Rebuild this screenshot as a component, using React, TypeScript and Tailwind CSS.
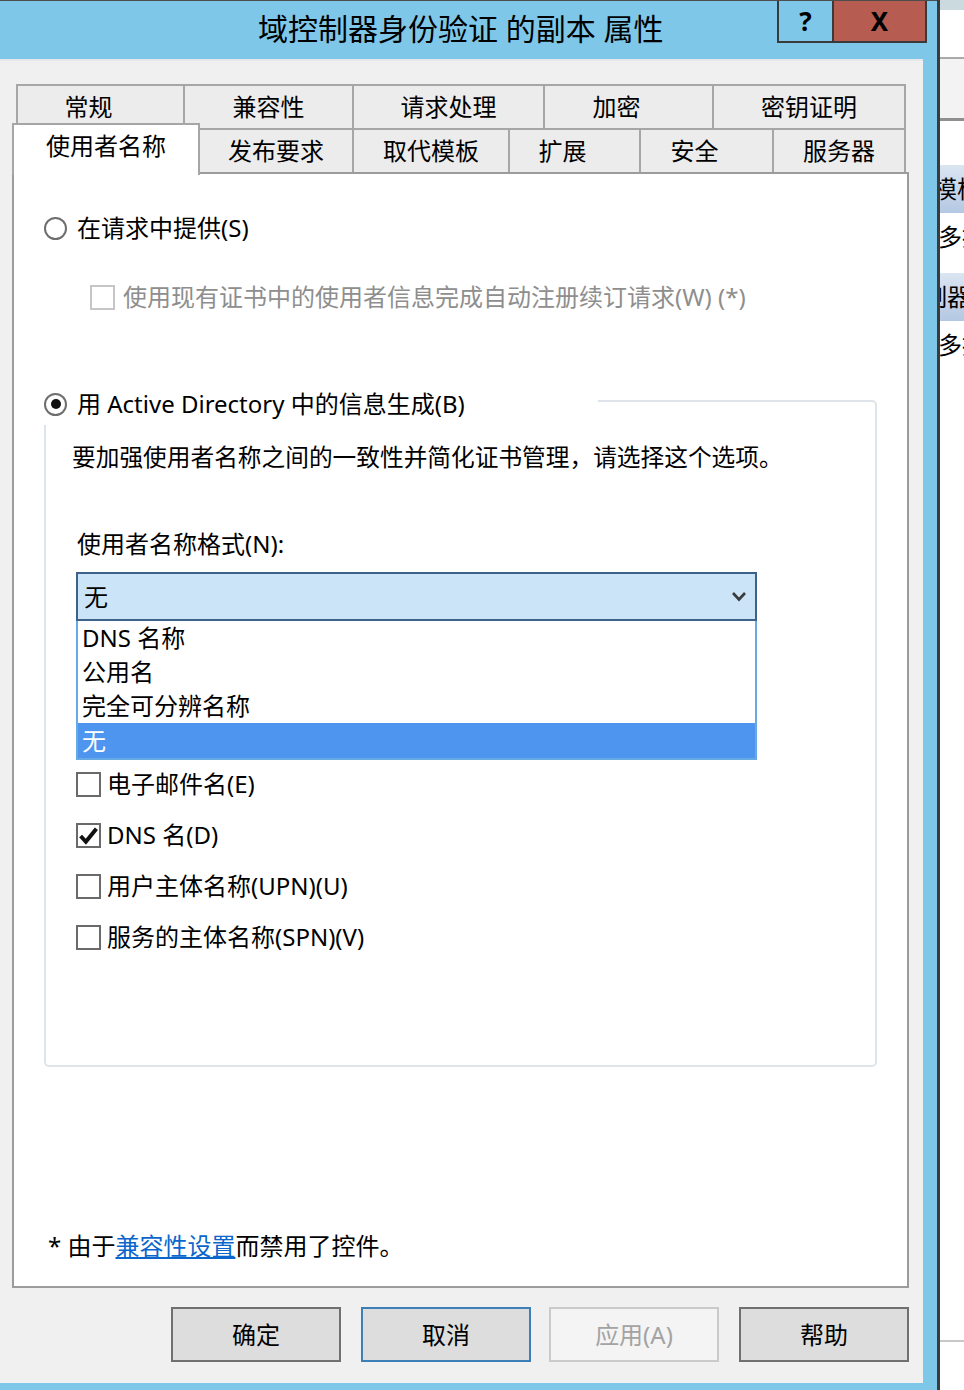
import React from "react";

function Radio({ checked }: { checked?: boolean }) {
  return (
    <div className="w-[23px] h-[23px] rounded-full border-2 border-[#6e6e6e] bg-white flex items-center justify-center shrink-0">
      {checked ? <div className="w-[10px] h-[10px] rounded-full bg-[#111]" /> : null}
    </div>
  );
}

function Check({ checked, disabled }: { checked?: boolean; disabled?: boolean }) {
  return (
    <div
      className={
        "w-[25px] h-[25px] border-2 bg-white flex items-center justify-center shrink-0 " +
        (disabled ? "border-[#c6c6c6]" : "border-[#6a6a6a]")
      }
    >
      {checked ? (
        <svg width="21" height="21" viewBox="0 0 20 20">
          <path d="M2.5 10.5 L7.5 16 L17.5 3.5" fill="none" stroke="#111" strokeWidth="3.8" strokeLinejoin="miter" />
        </svg>
      ) : null}
    </div>
  );
}

function Btn({ label, kind }: { label: string; kind?: "focus" | "disabled" }) {
  const cls =
    kind === "focus"
      ? "bg-[#dddddd] border-[#3c7fb7] text-black"
      : kind === "disabled"
      ? "bg-[#f4f4f4] border-[#cacaca] text-[#a3a3a3]"
      : "bg-[#dddddd] border-[#707070] text-black";
  return (
    <div className={"w-[170px] h-[55px] border-2 flex items-center justify-center text-[24px] leading-[32px] shrink-0 " + cls}>
      {label}
    </div>
  );
}

export default function App() {
  const row1 = [
    ["常规", 169],
    ["兼容性", 169],
    ["请求处理", 191],
    ["加密", 169],
    ["密钥证明", 192],
  ] as const;
  const row2 = [
    ["发布要求", 154],
    ["取代模板", 156],
    ["扩展", 131],
    ["安全", 133],
    ["服务器", 132],
  ] as const;
  const items = ["DNS 名称", "公用名", "完全可分辨名称", "无"];
  const checks: [string, boolean][] = [
    ["电子邮件名(E)", false],
    ["DNS 名(D)", true],
    ["用户主体名称(UPN)(U)", false],
    ["服务的主体名称(SPN)(V)", false],
  ];

  return (
    <div className="w-[964px] h-[1390px] flex overflow-hidden bg-white text-black font-['Noto_Sans','Noto_Sans_CJK_SC',sans-serif]">
      {/* dialog */}
      <div className="w-[937px] h-full flex flex-col bg-[#7fc7e8] border-t border-[#4d4d4d] shrink-0">
        {/* title bar */}
        <div className="h-[58px] flex items-start shrink-0">
          <div className="flex-1 pl-[258px] pt-[8px] text-[30px] leading-[40px] whitespace-nowrap">
            域控制器身份验证 的副本 属性
          </div>
          <div className="flex mr-[10px]">
            <div className="w-[57px] h-[42px] border-2 border-t-0 border-[#3a3a3a] bg-[#7fc7e8] flex items-center justify-center text-[26px] font-bold leading-none">
              ?
            </div>
            <div className="w-[93px] h-[42px] border-2 border-t-0 border-l-0 border-[#3a3a3a] bg-[#b65c50] flex items-center justify-center text-[26px] font-bold leading-none">
              X
            </div>
          </div>
        </div>
        {/* body */}
        <div className="flex-1 mr-[14px] mb-[7px] bg-[#f0f0f0] border-t-2 border-[#e4e8ea] flex flex-col">
          {/* tab control */}
          <div className="ml-[12px] mt-[23px] w-[897px] flex flex-col">
            <div className="flex h-[44px] ml-[4px]">
              {row1.map(([t, w], i) => (
                <div
                  key={t}
                  style={{ width: w }}
                  className={
                    "h-full bg-[#ececec] border-t-2 border-r-2 border-[#a6a6a6] flex items-center justify-center text-[24px] leading-[32px] " +
                    (i === 0 ? "border-l-2 " : "") +
                    (t.length === 2 ? "pr-[24px]" : "")
                  }
                >
                  {t}
                </div>
              ))}
            </div>
            <div className="flex h-[44px] items-start">
              <div className="relative z-10 w-[188px] h-[52px] -mt-[5px] bg-white border-t-2 border-l-2 border-r-2 border-[#a6a6a6] flex justify-center pt-[5px] text-[24px] leading-[32px]">
                使用者名称
              </div>
              {row2.map(([t, w]) => (
                <div
                  key={t}
                  style={{ width: w }}
                  className={
                    "h-full bg-[#ececec] border-t-2 border-r-2 border-[#a6a6a6] flex items-center justify-center text-[24px] leading-[32px] " +
                    (t.length === 2 ? "pr-[24px]" : "")
                  }
                >
                  {t}
                </div>
              ))}
            </div>
            {/* panel */}
            <div className="w-[897px] h-[1116px] border-2 border-[#9c9c9c] bg-white flex flex-col pl-[30px] text-[24px] leading-[32px]">
              <div className="mt-[38px] h-[32px] flex items-center gap-[10px]">
                <Radio />
                <span>在请求中提供(S)</span>
              </div>
              <div className="mt-[37px] ml-[46px] h-[32px] flex items-center gap-[8px] text-[#8e8e8e]">
                <Check disabled />
                <span>使用现有证书中的使用者信息完成自动注册续订请求(W) (*)</span>
              </div>
              {/* group box */}
              <div className="mt-[87px] w-[833px] h-[667px] relative border-2 border-[#dfe4ea] rounded-[5px] flex flex-col pl-[26px]">
                <div className="absolute left-[-4px] top-[-14px] w-[556px] h-[37px] bg-white pl-[2px]">
                  <div className="h-[32px] flex items-center gap-[10px]">
                    <Radio checked />
                    <span>用 Active Directory 中的信息生成(B)</span>
                  </div>
                </div>
                <div className="mt-[39px] h-[32px] text-[23.7px] whitespace-nowrap">
                  要加强使用者名称之间的一致性并简化证书管理，请选择这个选项。
                </div>
                <div className="mt-[55px] ml-[5px] h-[32px]">使用者名称格式(N):</div>
                <div className="mt-[12px] ml-[4px] w-[681px] h-[49px] relative">
                  <div className="w-full h-full bg-[#cce4f7] border-2 border-[#3d6289] flex items-center pl-[6px] pr-[8px]">
                    <span className="flex-1">无</span>
                    <svg width="16" height="11" viewBox="0 0 16 11">
                      <polyline points="2,2 8,8.5 14,2" fill="none" stroke="#3a3a3a" strokeWidth="2.6" />
                    </svg>
                  </div>
                  <div className="absolute left-0 top-full w-full h-[139px] bg-white border-x-2 border-b-2 border-[#67a9e3] z-20 flex flex-col">
                    {items.map((t, i) => (
                      <div
                        key={t}
                        className={
                          "h-[34px] flex items-center pl-[4px] " +
                          (i === 3 ? "bg-[#4e95ef] text-white h-[35px]" : "")
                        }
                      >
                        {t}
                      </div>
                    ))}
                  </div>
                </div>
                <div className="mt-[147px] ml-[4px] flex flex-col gap-[19px]">
                  {checks.map(([t, c]) => (
                    <div key={t} className="h-[32px] flex items-center gap-[6px]">
                      <Check checked={c} />
                      <span>{t}</span>
                    </div>
                  ))}
                </div>
              </div>
              <div className="mt-[163px] ml-[4px] h-[32px] whitespace-nowrap">
                * 由于<span className="text-[#0a66cc] underline">兼容性设置</span>而禁用了控件。
              </div>
            </div>
          </div>
          {/* buttons */}
          <div className="mt-[19px] flex h-[55px]">
            <div className="ml-[171px]">
              <Btn label="确定" />
            </div>
            <div className="ml-[20px]">
              <Btn label="取消" kind="focus" />
            </div>
            <div className="ml-[18px]">
              <Btn label="应用(A)" kind="disabled" />
            </div>
            <div className="ml-[20px]">
              <Btn label="帮助" />
            </div>
          </div>
        </div>
      </div>
      <div className="w-[3px] h-full bg-[#3b3b3b] shrink-0" />
      {/* background window */}
      <div className="flex-1 h-full flex flex-col overflow-hidden text-[24px] leading-[32px] whitespace-nowrap">
        <div className="h-[10px] bg-[#cbdadf]" />
        <div className="h-[47px] bg-white" />
        <div className="h-[2px] bg-[#a9a9a9]" />
        <div className="h-[59px] bg-[#f3f3f3]" />
        <div className="h-[3px] bg-[#8f8f8f]" />
        <div className="h-[44px] bg-white" />
        <div className="h-[48px] bg-gradient-to-b from-[#dbe5f2] to-[#b4c8e3] flex items-center">
          <span className="-ml-[7px]">模板</span>
        </div>
        <div className="h-[48px] bg-white flex items-center">
          <span className="-ml-[2px]">多控</span>
        </div>
        <div className="h-[12px] bg-white" />
        <div className="h-[48px] bg-gradient-to-b from-[#dbe5f2] to-[#b4c8e3] flex items-center">
          <span className="-ml-[17px]">制器</span>
        </div>
        <div className="h-[48px] bg-white flex items-center">
          <span className="-ml-[2px]">多控</span>
        </div>
        <div className="flex-1 bg-white" />
        <div className="h-[2px] bg-[#c8c8c8]" />
        <div className="h-[48px] bg-white" />
      </div>
    </div>
  );
}
